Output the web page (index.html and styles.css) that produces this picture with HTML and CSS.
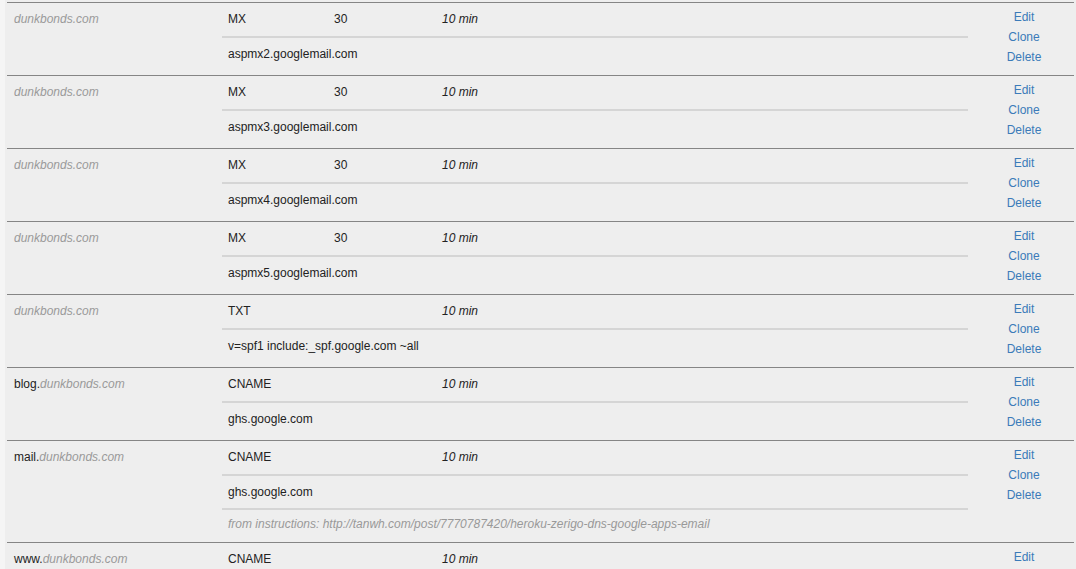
FILE: index.html
```html
<!DOCTYPE html>
<html>
<head>
<meta charset="utf-8">
<title>DNS records</title>
<link rel="stylesheet" href="styles.css">
</head>
<body>
<div class="records">
  <div class="record">
    <div class="name"><span class="domain">dunkbonds.com</span></div>
    <div class="detail">
      <div class="sub head"><span class="type">MX</span><span class="prio">30</span><span class="ttl">10 min</span></div>
      <div class="sub">aspmx2.googlemail.com</div>
    </div>
    <div class="actions"><a href="#">Edit</a><a href="#">Clone</a><a href="#">Delete</a></div>
  </div>
  <div class="record">
    <div class="name"><span class="domain">dunkbonds.com</span></div>
    <div class="detail">
      <div class="sub head"><span class="type">MX</span><span class="prio">30</span><span class="ttl">10 min</span></div>
      <div class="sub">aspmx3.googlemail.com</div>
    </div>
    <div class="actions"><a href="#">Edit</a><a href="#">Clone</a><a href="#">Delete</a></div>
  </div>
  <div class="record">
    <div class="name"><span class="domain">dunkbonds.com</span></div>
    <div class="detail">
      <div class="sub head"><span class="type">MX</span><span class="prio">30</span><span class="ttl">10 min</span></div>
      <div class="sub">aspmx4.googlemail.com</div>
    </div>
    <div class="actions"><a href="#">Edit</a><a href="#">Clone</a><a href="#">Delete</a></div>
  </div>
  <div class="record">
    <div class="name"><span class="domain">dunkbonds.com</span></div>
    <div class="detail">
      <div class="sub head"><span class="type">MX</span><span class="prio">30</span><span class="ttl">10 min</span></div>
      <div class="sub">aspmx5.googlemail.com</div>
    </div>
    <div class="actions"><a href="#">Edit</a><a href="#">Clone</a><a href="#">Delete</a></div>
  </div>
  <div class="record">
    <div class="name"><span class="domain">dunkbonds.com</span></div>
    <div class="detail">
      <div class="sub head"><span class="type">TXT</span><span class="prio"></span><span class="ttl">10 min</span></div>
      <div class="sub">v=spf1 include:_spf.google.com ~all</div>
    </div>
    <div class="actions"><a href="#">Edit</a><a href="#">Clone</a><a href="#">Delete</a></div>
  </div>
  <div class="record">
    <div class="name">blog.<span class="domain">dunkbonds.com</span></div>
    <div class="detail">
      <div class="sub head"><span class="type">CNAME</span><span class="prio"></span><span class="ttl">10 min</span></div>
      <div class="sub">ghs.google.com</div>
    </div>
    <div class="actions"><a href="#">Edit</a><a href="#">Clone</a><a href="#">Delete</a></div>
  </div>
  <div class="record">
    <div class="name">mail.<span class="domain">dunkbonds.com</span></div>
    <div class="detail">
      <div class="sub head"><span class="type">CNAME</span><span class="prio"></span><span class="ttl">10 min</span></div>
      <div class="sub">ghs.google.com</div>
      <div class="sub note">from instructions: http://tanwh.com/post/7770787420/heroku-zerigo-dns-google-apps-email</div>
    </div>
    <div class="actions"><a href="#">Edit</a><a href="#">Clone</a><a href="#">Delete</a></div>
  </div>
  <div class="record">
    <div class="name">www.<span class="domain">dunkbonds.com</span></div>
    <div class="detail">
      <div class="sub head"><span class="type">CNAME</span><span class="prio"></span><span class="ttl">10 min</span></div>
      <div class="sub">ghs.google.com</div>
    </div>
    <div class="actions"><a href="#">Edit</a><a href="#">Clone</a><a href="#">Delete</a></div>
  </div>
</div>
</body>
</html>
```

FILE: styles.css
```css
html, body {
  margin: 0;
  padding: 0;
}

body {
  background: #f5f5f5;
  font-family: "Liberation Sans", Arial, Helvetica, sans-serif;
  font-size: 12px;
  color: #222;
}

.records {
  margin-left: 5px;
  background: #eeeeee;
  padding: 2px 2px 0 2px;
}

.record {
  display: flex;
  border-top: 1px solid #858585;
}

.name {
  width: 215px;
  flex: none;
  box-sizing: border-box;
  padding: 7px 7px 8px;
  line-height: 18px;
  color: #222;
}

.domain {
  color: #9a9a9a;
  font-style: italic;
}

.detail {
  width: 746px;
  flex: none;
  display: flex;
  flex-direction: column;
}

.sub {
  padding: 7px 6px 7px;
  line-height: 18px;
}

.sub + .sub {
  border-top: 2px solid #d5d5d5;
}

.head {
  display: flex;
  padding-bottom: 8px;
}

.type {
  width: 106px;
}

.prio {
  width: 108px;
}

.ttl {
  font-style: italic;
}

.sub.note {
  padding-top: 5px;
  padding-bottom: 9px;
  font-style: italic;
  color: #999;
}

.actions {
  flex: 1;
  display: flex;
  flex-direction: column;
  align-items: center;
  padding: 4px 0 8px 6px;
}

.actions a {
  display: block;
  line-height: 20px;
  color: #3b7bb9;
  text-decoration: none;
}
```
